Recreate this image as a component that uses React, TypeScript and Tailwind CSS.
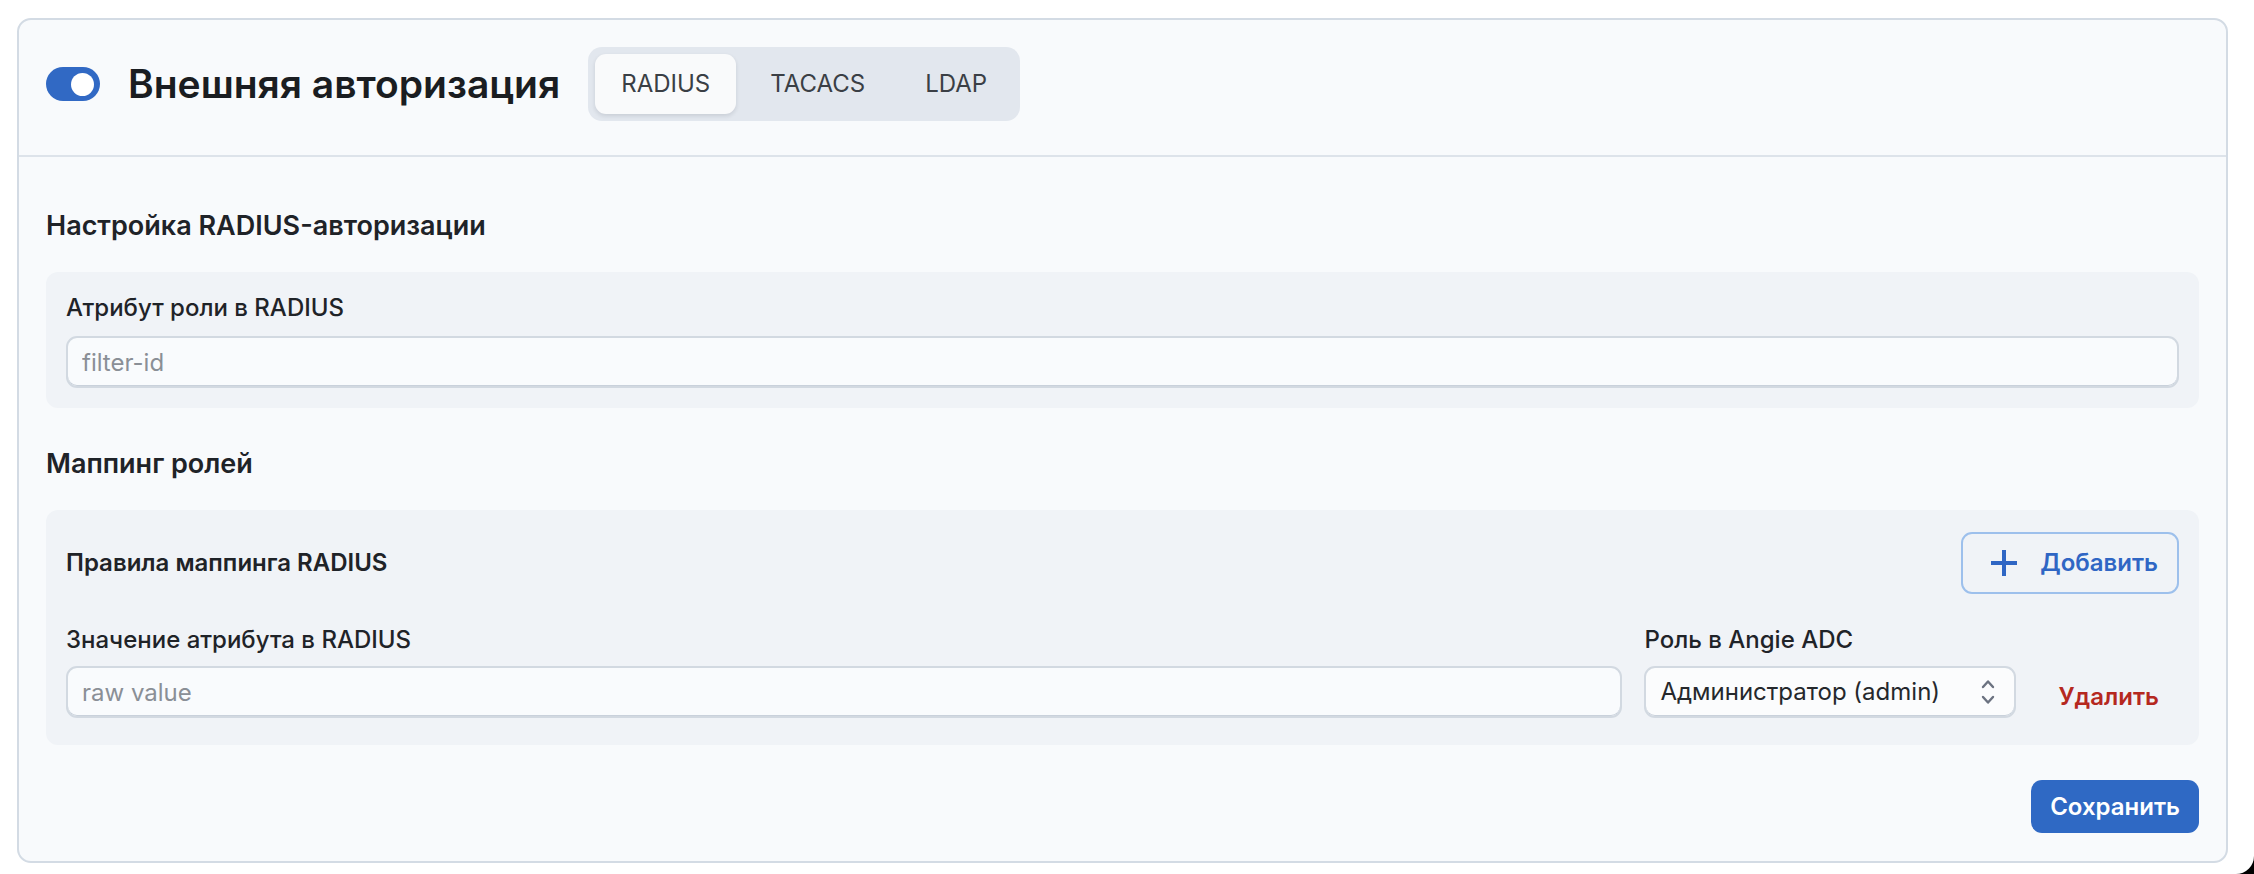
import { useState } from "react";

const font = { fontFamily: "Inter, 'Noto Sans', sans-serif" };

const tabs = ["RADIUS", "TACACS", "LDAP"];

const PlusIcon = () => (
  <svg width="28" height="28" viewBox="0 0 28 28" fill="none">
    <path d="M14 1v26M1 14h26" stroke="#2f66c4" strokeWidth="4" />
  </svg>
);

const SelectChevrons = () => (
  <svg width="16" height="30" viewBox="0 0 16 30" fill="none">
    <path d="M3 10l5-5.5 5 5.5M3 20l5 5.5 5-5.5" stroke="#6b7280" strokeWidth="2.4" strokeLinecap="round" strokeLinejoin="round" />
  </svg>
);

const TextInput = ({ placeholder }: { placeholder: string }) => (
  <input
    placeholder={placeholder}
    className="w-full h-[52px] rounded-[11px] border-2 border-[#d2d9e1] bg-[#f9fbfd] px-[14px] text-[24px] text-[#1f2328] placeholder:text-[#8a8f96] outline-none shadow-[inset_0_-1px_0_#c9d1db]"
  />
);

const App = () => {
  const [active, setActive] = useState("RADIUS");
  const [enabled, setEnabled] = useState(true);

  return (
    <div className="min-h-screen bg-white pt-[18px] pl-[17px] pr-[26px] pb-[12px]" style={font}>
      <div className="rounded-[14px] border-2 border-[#d3dbe4] bg-[#f8fafc]">
        {/* Header */}
        <div className="flex items-center gap-[28px] px-[27px] pt-[27px] pb-[34px] border-b-2 border-[#dde3ea]">
          <button
            onClick={() => setEnabled(!enabled)}
            className={`flex items-center w-[54px] h-[34px] rounded-full px-[6px] ${enabled ? "bg-[#3169c4] justify-end" : "bg-[#cbd3dc] justify-start"}`}
          >
            <span className="block w-[23px] h-[23px] rounded-full bg-white" />
          </button>
          <h1 className="text-[39px] leading-[48px] font-semibold text-[#1a1d21]">Внешняя авторизация</h1>
          <div className="flex gap-2 p-[7px] rounded-[14px] bg-[#e2e7ee]">
            {tabs.map(t => (
              <button
                key={t}
                onClick={() => setActive(t)}
                className={`h-[60px] px-[26px] rounded-[11px] text-[24px] text-[#3a3f45] ${active === t ? "bg-[#f9fafb] shadow-[0_2px_4px_rgba(15,23,42,0.12)]" : ""}`}
              >
                {t}
              </button>
            ))}
          </div>
        </div>

        {/* Body */}
        <div className="px-[27px] pt-[51px] pb-[28px]">
          <h2 className="text-[27px] leading-[36px] font-semibold text-[#1f2328] mb-[28px]">Настройка RADIUS-авторизации</h2>
          <div className="rounded-[12px] bg-[#f0f3f7] p-5">
            <label className="block text-[24px] leading-[32px] font-medium text-[#1f2328] mb-[12px]">Атрибут роли в RADIUS</label>
            <TextInput placeholder="filter-id" />
          </div>

          <h2 className="text-[27px] leading-[36px] font-semibold text-[#1f2328] mt-[38px] mb-[28px]">Маппинг ролей</h2>
          <div className="rounded-[12px] bg-[#f0f3f7] px-5 pt-[22px] pb-[27px]">
            <div className="flex items-center justify-between">
              <h3 className="text-[24px] leading-[32px] font-semibold text-[#1f2328]">Правила маппинга RADIUS</h3>
              <button className="flex items-center gap-[22px] h-[62px] pl-[27px] pr-[19px] rounded-[11px] border-2 border-[#9dc0ec] text-[24px] font-semibold text-[#2f66c4]">
                <PlusIcon />
                Добавить
              </button>
            </div>

            <div className="flex items-end gap-[22px] mt-[30px]">
              <div className="flex-1">
                <label className="block text-[24px] leading-[32px] font-medium text-[#1f2328] mb-[10px]">Значение атрибута в RADIUS</label>
                <TextInput placeholder="raw value" />
              </div>
              <div className="w-[372px]">
                <label className="block text-[24px] leading-[32px] font-medium text-[#1f2328] mb-[10px]">Роль в Angie ADC</label>
                <div className="flex items-center justify-between h-[52px] rounded-[11px] border-2 border-[#d2d9e1] bg-[#fbfcfd] pl-[14px] pr-[18px] shadow-[inset_0_-1px_0_#c9d1db]">
                  <span className="text-[24px] text-[#25282c]">Администратор (admin)</span>
                  <SelectChevrons />
                </div>
              </div>
              <button className="h-[52px] px-5 pt-[10px] text-[24px] font-semibold text-[#b5281f]">Удалить</button>
            </div>
          </div>

          <div className="flex justify-end mt-[35px]">
            <button className="h-[53px] px-[19px] rounded-[11px] bg-[#2f69c4] text-[24px] font-semibold text-white">Сохранить</button>
          </div>
        </div>
      </div>

      {/* screen corner */}
      <div className="fixed bottom-0 right-0 w-[18px] h-[18px] bg-black">
        <div className="w-full h-full bg-white rounded-br-[18px]" />
      </div>
    </div>
  );
};

export default App;
